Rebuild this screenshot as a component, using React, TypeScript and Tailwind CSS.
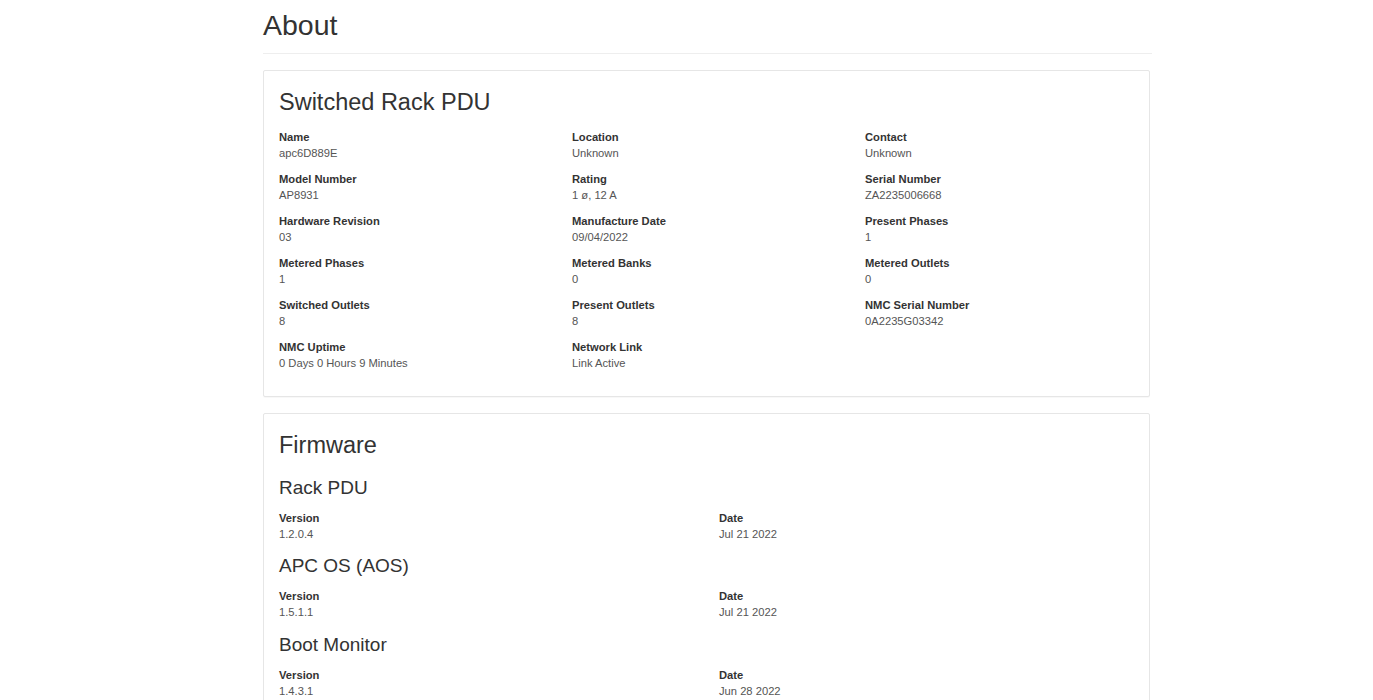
import React from 'react';

interface Field {
  label: string;
  value: string;
}

const pduFields: Field[] = [
  { label: 'Name', value: 'apc6D889E' },
  { label: 'Location', value: 'Unknown' },
  { label: 'Contact', value: 'Unknown' },
  { label: 'Model Number', value: 'AP8931' },
  { label: 'Rating', value: '1 ø, 12 A' },
  { label: 'Serial Number', value: 'ZA2235006668' },
  { label: 'Hardware Revision', value: '03' },
  { label: 'Manufacture Date', value: '09/04/2022' },
  { label: 'Present Phases', value: '1' },
  { label: 'Metered Phases', value: '1' },
  { label: 'Metered Banks', value: '0' },
  { label: 'Metered Outlets', value: '0' },
  { label: 'Switched Outlets', value: '8' },
  { label: 'Present Outlets', value: '8' },
  { label: 'NMC Serial Number', value: '0A2235G03342' },
  { label: 'NMC Uptime', value: '0 Days 0 Hours 9 Minutes' },
  { label: 'Network Link', value: 'Link Active' },
];

const firmware = [
  { name: 'Rack PDU', version: '1.2.0.4', date: 'Jul 21 2022' },
  { name: 'APC OS (AOS)', version: '1.5.1.1', date: 'Jul 21 2022' },
  { name: 'Boot Monitor', version: '1.4.3.1', date: 'Jun 28 2022' },
];

const Item: React.FC<Field> = ({ label, value }) => (
  <div className="mb-[10px] text-[11.2px] leading-[16px]">
    <div className="font-bold text-[#333]">{label}</div>
    <div className="text-[#555]">{value}</div>
  </div>
);

const Card: React.FC<{ title: string; children: React.ReactNode }> = ({ title, children }) => (
  <div className="border border-[#e6e6e6] rounded-[2px] shadow-[0_1px_1px_rgba(0,0,0,0.03)] bg-white pt-[18px] pb-[15px] px-[15px]">
    <h2 className="text-[23.5px] leading-[26.4px] text-[#333] font-normal">{title}</h2>
    {children}
  </div>
);

const App: React.FC = () => {
  return (
    <div className="min-h-screen bg-white font-['Liberation_Sans',Arial,sans-serif] text-[#333]">
      <div className="w-[889px] ml-[263px] pb-10">
        {/* Page header */}
        <h1 className="pt-[10px] text-[28.5px] leading-[31.7px] font-normal text-[#333]">About</h1>
        <div className="mt-[11px] border-b border-[#eee]" />

        <div className="w-[887px] mt-[16px] space-y-[16px]">
          <Card title="Switched Rack PDU">
            <div className="mt-[14px] grid grid-cols-[293px_293px_1fr]">
              {pduFields.map((f) => (
                <Item key={f.label} label={f.label} value={f.value} />
              ))}
            </div>
          </Card>

          <Card title="Firmware">
            <div className="mt-[18px]">
              {firmware.map((fw, idx) => (
                <div key={fw.name} className={idx > 0 ? 'mt-[3.5px]' : ''}>
                  <h3 className="text-[19px] leading-[21.1px] text-[#333] font-normal mb-[12px]">{fw.name}</h3>
                  <div className="grid grid-cols-[440px_1fr]">
                    <Item label="Version" value={fw.version} />
                    <Item label="Date" value={fw.date} />
                  </div>
                </div>
              ))}
            </div>
          </Card>
        </div>
      </div>
    </div>
  );
};

export default App;
